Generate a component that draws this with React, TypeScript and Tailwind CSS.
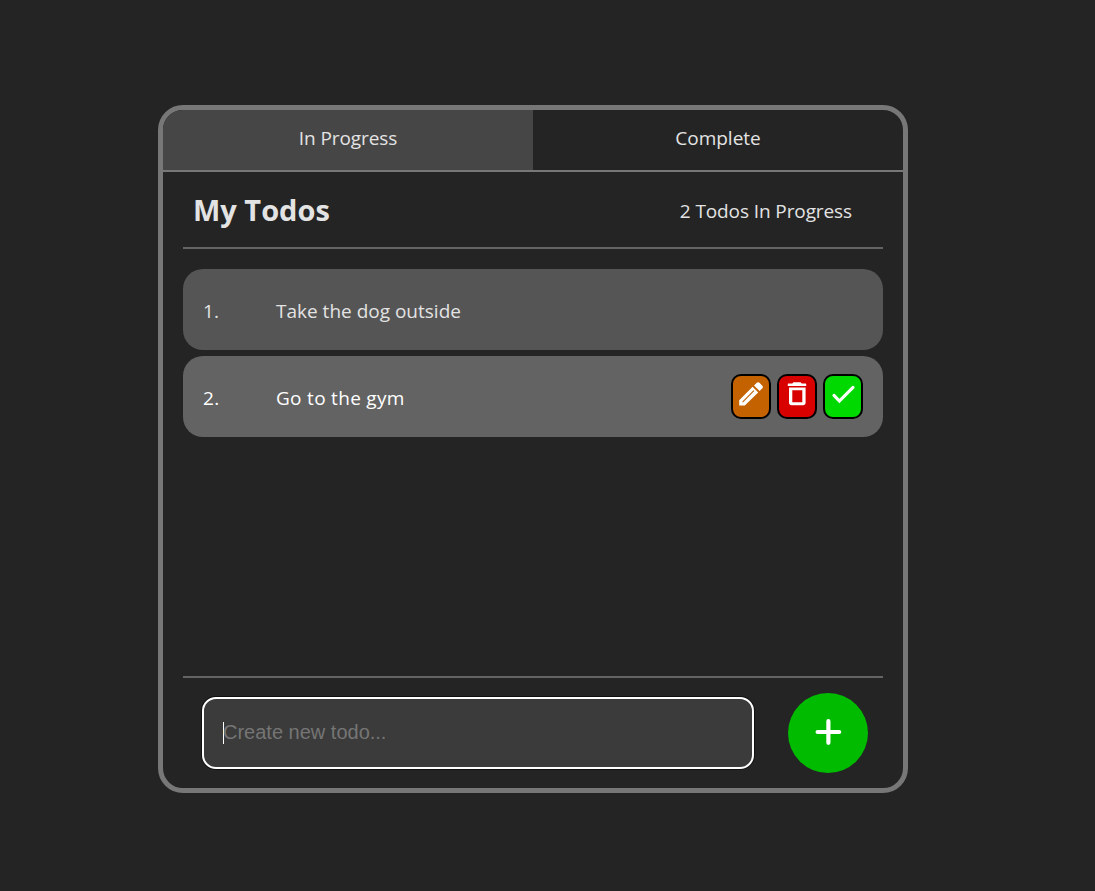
import React from 'react';

const tabs = ['In Progress', 'Complete'];
const todos = ['Take the dog outside', 'Go to the gym'];

function ActionButton({ label, color, children }: { label: string; color: string; children: React.ReactNode }) {
  return (
    <button
      aria-label={label}
      className={`flex h-[45px] w-10 justify-center rounded-[10px] border-2 border-black pt-[2px] ${color}`}
    >
      <svg viewBox="0 0 32 32" className="size-8 shrink-0" fill="white">
        {children}
      </svg>
    </button>
  );
}

function PencilIcon() {
  return (
    <path
      fillRule="evenodd"
      d="M4.2 27.4v-5.2L17.6 8.8l5.6 5.6L9.8 27.4H4.2ZM7.4 24.2h.8L19.3 13.1l-.8-.8L7.4 23.4v.8ZM19 7.5l2.5-2.5c1-1 2.2-1 3.2 0l2.4 2.4c1 1 1 2.2 0 3.2L24.6 13.1 19 7.5Z"
    />
  );
}

function TrashIcon() {
  return (
    <path
      fillRule="evenodd"
      d="M6.8 6.1c0-.4.2-.6.6-.6h3.9l.7-.8c.3-.3.6-.4 1-.4h6c.4 0 .7.1 1 .4l.7.8h3.9c.4 0 .6.2.6.6V8H6.8V6.1ZM8 9.6h16.6v15.2c0 1.5-1 2.5-2.5 2.5H10.5c-1.5 0-2.5-1-2.5-2.5V9.6ZM11.3 12.3v12h10v-12h-10Z"
    />
  );
}

function CheckIcon() {
  return <path d="m7 17.4 5.4 5.6L26 9.4" fill="none" stroke="white" strokeWidth="3.1" strokeLinecap="round" />;
}

export default function App() {
  return (
    <div className="min-h-[891px] bg-[#242424] pl-[158px] pt-[105px] font-['Open_Sans','Noto_Sans',sans-serif] text-[19px] leading-[30px] text-[#e3e3e3]">
      <main className="flex h-[688px] w-[750px] flex-col overflow-hidden rounded-[25px] border-[5px] border-[#777777]">
        <nav className="grid h-[62px] shrink-0 grid-cols-2 border-b-2 border-[#777777]">
          {tabs.map((tab, i) => (
            <button key={tab} className={i === 0 ? 'bg-[#464646] pb-1 tracking-[-0.1px]' : 'pb-1'}>
              {tab}
            </button>
          ))}
        </nav>
        <header className="mx-5 flex h-[77px] shrink-0 items-center justify-between border-b-2 border-[#646464] pl-[10px] pr-[31px]">
          <h1 className="text-[29px] font-bold">My Todos</h1>
          <span className="pt-[2px] tracking-[-0.1px]">2 Todos In Progress</span>
        </header>
        <ol className="mx-5 flex grow flex-col gap-[6px] pt-5">
          {todos.map((todo, i) => (
            <li
              key={todo}
              className={`flex h-[81px] items-center rounded-[20px] px-5 ${i === 1 ? 'bg-[#636363] text-white tracking-[0.3px]' : 'bg-[#555555]'}`}
            >
              <span className="w-[73px] pt-[2px]">{i + 1}.</span>
              <span className="grow pt-[2px]">{todo}</span>
              {i === 1 && (
                <div className="flex gap-[6px]">
                  <ActionButton label="Edit" color="bg-[#c46200]">
                    <PencilIcon />
                  </ActionButton>
                  <ActionButton label="Delete" color="bg-[#d90000]">
                    <TrashIcon />
                  </ActionButton>
                  <ActionButton label="Complete" color="bg-[#00d900]">
                    <CheckIcon />
                  </ActionButton>
                </div>
              )}
            </li>
          ))}
        </ol>
        <footer className="mx-5 flex h-[112px] shrink-0 items-start border-t-2 border-[#646464] pl-[19px] pr-[15px] pt-[15px]">
          <div className="mt-1 flex h-[72px] w-[552px] items-center rounded-[14px] border-2 border-white bg-[#3b3b3b] pl-[19px] shadow-[0_0_0_1px_#101010]">
            <span className="h-[22px] w-px bg-white" />
            <span className="-ml-px pb-[2px] font-['Liberation_Sans',sans-serif] text-[20px] text-[#757575]">Create new todo...</span>
          </div>
          <button aria-label="Add todo" className="ml-auto flex size-20 items-center justify-center rounded-full bg-[#00bb00]">
            <svg viewBox="0 0 28 28" className="-mt-[2px] size-7" stroke="white" strokeWidth="4.2" strokeLinecap="round">
              <path d="M14.4 3.2v21.6M3.6 14h21.6" />
            </svg>
          </button>
        </footer>
      </main>
    </div>
  );
}
